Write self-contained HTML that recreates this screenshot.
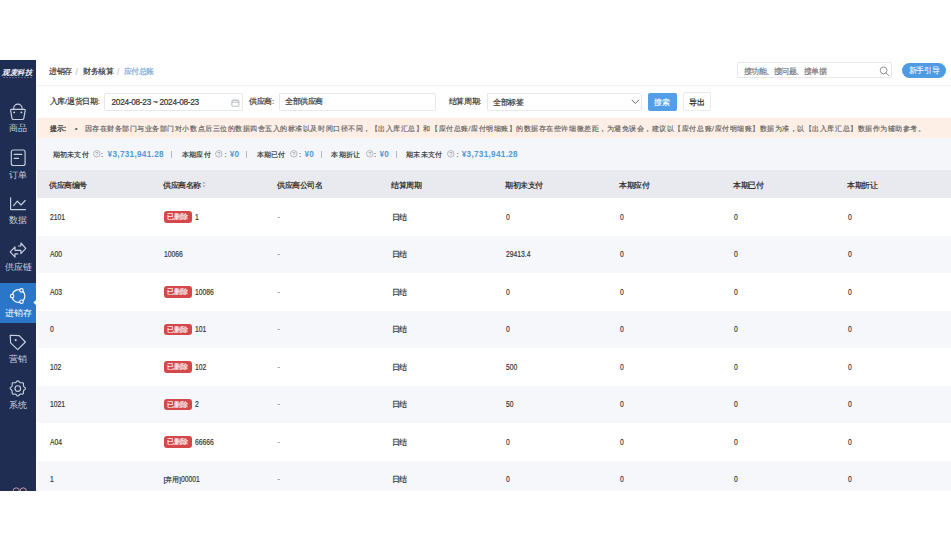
<!DOCTYPE html>
<html><head><meta charset="utf-8">
<style>
*{margin:0;padding:0;box-sizing:border-box;}
html,body{width:951px;height:552px;overflow:hidden;background:#fff;font-family:"Liberation Sans",sans-serif;color:#333;}
.abs{position:absolute;}
#side{position:absolute;left:0;top:60px;width:36.3px;height:431px;background:#1f2d52;}
.logo{position:absolute;left:0.5px;top:8.3px;width:33px;text-align:center;color:#e8ecf5;font-size:7.5px;font-style:italic;font-weight:bold;letter-spacing:-0.5px;white-space:nowrap;}
.logo small{display:block;font-size:2px;line-height:2px;letter-spacing:0;font-style:normal;font-weight:normal;margin-top:-0.5px;color:#aab;}
.mi{position:absolute;left:0;width:36px;text-align:center;color:#c9d0df;font-size:8.5px;line-height:9px;white-space:nowrap;}
.mi svg{position:absolute;left:10px;}
.active{position:absolute;left:0;top:222.6px;width:36.3px;height:40px;background:#2a76c9;}
#main{position:absolute;left:37px;top:60px;width:914px;height:431px;background:#fff;overflow:hidden;}
.t{position:absolute;white-space:nowrap;font-size:7.5px;letter-spacing:-0.5px;line-height:10px;}
.inp{position:absolute;border:1px solid #e2e4e8;border-radius:2px;background:#fff;height:18px;}
.btn{position:absolute;border-radius:2px;height:18px;font-size:7.5px;line-height:16px;text-align:center;}
#notice{position:absolute;left:0;top:57.5px;width:914px;height:20.5px;background:#fdefe6;}
#sum{position:absolute;left:0;top:78px;width:914px;height:32px;background:#f4f6fa;}
#thead{position:absolute;left:0;top:110.2px;width:914px;height:28.3px;background:#e8eaef;}
.row{position:absolute;left:0;width:914px;height:37.5px;}
.row.g{background:#f5f7fa;}
.c{position:absolute;top:0.5px;margin-left:0.5px;height:37.5px;line-height:37.5px;font-size:7.4px;letter-spacing:-0.15px;color:#333;white-space:nowrap;}
.th{position:absolute;top:1.6px;height:28.3px;line-height:28.3px;font-size:8px;letter-spacing:-0.5px;color:#222;-webkit-text-stroke:0.2px #222;white-space:nowrap;}
.tag{display:inline-block;vertical-align:middle;background:#d4474b;color:#fff;border-radius:3px;height:11.5px;line-height:11.5px;width:28.4px;text-align:center;font-size:7px;letter-spacing:0.4px;-webkit-text-stroke:0.15px #fff;margin-right:3px;position:relative;top:-1px;}
.blue{color:#4d9be3;font-weight:bold;}
.q{color:#888;}
.cj{font-size:8px;letter-spacing:-0.9px;position:relative;top:-0.3px;}
.c,.t,.sl{-webkit-text-stroke:0.18px currentColor;}
.n{display:inline-block;font-size:8.7px;letter-spacing:0;transform:scaleX(0.78);transform-origin:0 50%;}
.sl{position:absolute;top:12px;font-size:7.3px;letter-spacing:0.3px;line-height:10px;color:#333;white-space:nowrap;}
.sv{position:absolute;top:11.6px;font-size:8.2px;line-height:10px;color:#5598d6;font-weight:bold;letter-spacing:0.3px;white-space:nowrap;}
</style></head>
<body>
<div id="side">
  <div class="logo">观麦科技</div><div class="abs" style="left:3px;top:17px;width:29px;height:0.8px;background:repeating-linear-gradient(90deg,#9aa3b8 0 2px,transparent 2px 3px);opacity:0.45;"></div>
  <div class="active"></div>
  <svg class="abs" style="left:0;top:0" width="37" height="431" viewBox="0 60 37 431" fill="none" stroke="#c9d0e0" stroke-width="1.15" stroke-linejoin="round" stroke-linecap="round">
<path d="M13.7 109.4 V108.3 A4.2 4.2 0 0 1 22.1 108.3 V109.4"/>
<path d="M11.4 109.4 H24.4 Q25.3 109.4 25.2 110.3 L23.8 118.3 Q23.6 119.5 22.4 119.5 H13.4 Q12.2 119.5 12 118.3 L10.6 110.3 Q10.5 109.4 11.4 109.4 Z"/>
<circle cx="14.2" cy="112.4" r="0.95" fill="#c9d0e0" stroke="none"/>
<circle cx="21.4" cy="112.4" r="0.95" fill="#c9d0e0" stroke="none"/>
<rect x="11.3" y="150" width="13.8" height="15.5" rx="2"/>
<path d="M14.2 154.4 H21.8 M14.2 158.4 H18.6"/>
<path d="M10.6 197.8 V209.6 H25.5"/>
<path d="M13.6 205.6 L17.4 201.2 L21 205 L25.2 200.5"/>
<path d="M18.6 246 L20.9 246 L20.9 243 L25.8 248.3 L20.9 253.6 L20.9 250.3 L17.6 250.3"/>
<path d="M17.6 250.3 L15 250.3 L15 246.8 L10.2 251.8 L15 257.2 L15 253.8 L17.8 253.8"/>
<path d="M17.80 380.80 L18.17 380.87 L18.52 381.08 L18.84 381.40 L19.12 381.78 L19.39 382.04 L19.65 382.29 L19.92 382.49 L20.19 382.63 L20.48 382.72 L20.81 382.77 L21.17 382.78 L21.55 382.79 L22.01 382.72 L22.46 382.72 L22.86 382.82 L23.17 383.03 L23.38 383.34 L23.48 383.74 L23.48 384.19 L23.41 384.65 L23.42 385.03 L23.43 385.39 L23.48 385.72 L23.57 386.01 L23.71 386.28 L23.91 386.55 L24.16 386.81 L24.42 387.08 L24.80 387.36 L25.12 387.68 L25.33 388.03 L25.40 388.40 L25.33 388.77 L25.12 389.12 L24.80 389.44 L24.42 389.72 L24.16 389.99 L23.91 390.25 L23.71 390.52 L23.57 390.79 L23.48 391.08 L23.43 391.41 L23.42 391.77 L23.41 392.15 L23.48 392.61 L23.48 393.06 L23.38 393.46 L23.17 393.77 L22.86 393.98 L22.46 394.08 L22.01 394.08 L21.55 394.01 L21.17 394.02 L20.81 394.03 L20.48 394.08 L20.19 394.17 L19.92 394.31 L19.65 394.51 L19.39 394.76 L19.12 395.02 L18.84 395.40 L18.52 395.72 L18.17 395.93 L17.80 396.00 L17.43 395.93 L17.08 395.72 L16.76 395.40 L16.48 395.02 L16.21 394.76 L15.95 394.51 L15.68 394.31 L15.41 394.17 L15.12 394.08 L14.79 394.03 L14.43 394.02 L14.05 394.01 L13.59 394.08 L13.14 394.08 L12.74 393.98 L12.43 393.77 L12.22 393.46 L12.12 393.06 L12.12 392.61 L12.19 392.15 L12.18 391.77 L12.17 391.41 L12.12 391.08 L12.03 390.79 L11.89 390.52 L11.69 390.25 L11.44 389.99 L11.18 389.72 L10.80 389.44 L10.48 389.12 L10.27 388.77 L10.20 388.40 L10.27 388.03 L10.48 387.68 L10.80 387.36 L11.18 387.08 L11.44 386.81 L11.69 386.55 L11.89 386.28 L12.03 386.01 L12.12 385.72 L12.17 385.39 L12.18 385.03 L12.19 384.65 L12.12 384.19 L12.12 383.74 L12.22 383.34 L12.43 383.03 L12.74 382.82 L13.14 382.72 L13.59 382.72 L14.05 382.79 L14.43 382.78 L14.79 382.77 L15.12 382.72 L15.41 382.63 L15.68 382.49 L15.95 382.29 L16.21 382.04 L16.48 381.78 L16.76 381.40 L17.08 381.08 L17.43 380.87 L17.80 380.80Z"/>
<circle cx="17.8" cy="388.5" r="2.8"/>
<path d="M10.2 335.2 L19.2 335.6 L25.4 342 L17.7 349.7 L10.6 342.8 Z"/>
<circle cx="15.7" cy="340.1" r="1.1" fill="#c9d0e0" stroke="none"/>
<path d="M13 491 A3.2 3.2 0 0 1 19.4 491 M20 491 A3.2 3.2 0 0 1 26.4 491" stroke="#d8a3ad" stroke-width="0.9"/>
</svg>
  <svg class="abs" style="left:0;top:0" width="37" height="431" viewBox="0 60 37 431" fill="none" stroke="#fff" stroke-width="1.15">
<circle cx="18.5" cy="296.05" r="6.4"/>
<circle cx="21.50" cy="290.40" r="1.7" fill="#235ea6"/><circle cx="12.10" cy="296.05" r="1.7" fill="#235ea6"/><circle cx="21.50" cy="301.70" r="1.7" fill="#235ea6"/>
<path d="M33.4 302.5 L36.5 299.6 L36.5 305.4 Z" fill="#fff" stroke="none"/>
</svg>
  <div class="mi" style="top:64.2px;">商品</div>
  <div class="mi" style="top:110.6px;">订单</div>
  <div class="mi" style="top:155.7px;">数据</div>
  <div class="mi" style="top:202.6px;">供应链</div>
  <div class="mi" style="top:249px;color:#fff;">进销存</div>
  <div class="mi" style="top:294.8px;">营销</div>
  <div class="mi" style="top:341.3px;">系统</div>
</div>
<div id="main">
  <!-- breadcrumb -->
  <div class="t" style="left:12.3px;top:7.3px;color:#333;">进销存</div>
  <div class="t" style="left:38.4px;top:6.8px;color:#c8ccd4;font-size:8.5px;letter-spacing:0;">/</div>
  <div class="t" style="left:46px;top:7.3px;color:#333;">财务核算</div>
  <div class="t" style="left:79.9px;top:6.8px;color:#c8ccd4;font-size:8.5px;letter-spacing:0;">/</div>
  <div class="t" style="left:86.7px;top:7.3px;color:#78a9db;">应付总账</div>
  <div class="abs" style="left:0;top:25.3px;width:914px;height:1px;background:#f1f2f5;"></div>
  <!-- search -->
  <div class="inp" style="left:700.4px;top:2.3px;width:155px;height:16.2px;border-color:#e6e8ec;"></div>
  <div class="t" style="left:707px;top:6.5px;color:#777;font-size:7.5px;letter-spacing:-0.55px;">搜功能、搜问题、搜单据</div>
  <svg class="abs" style="left:842px;top:5.5px;" width="11" height="11" viewBox="0 0 11 11" fill="none" stroke="#888" stroke-width="0.9"><circle cx="4.6" cy="4.4" r="3.4"/><path d="M7 6.9 L9.8 9.7" stroke-linecap="round"/></svg>
  <div class="btn" style="left:865px;top:3.1px;width:44px;height:15.4px;border-radius:7.7px;background:#4d9be3;color:#fff;line-height:15.6px;font-size:7.5px;letter-spacing:-0.3px;-webkit-text-stroke:0.05px #fff;">新手引导</div>
  <!-- filter -->
  <div class="t" style="left:12.7px;top:37px;letter-spacing:-0.3px;">入库/退货日期:</div>
  <div class="inp" style="left:67.4px;top:32.6px;width:138.4px;height:18.3px;border-color:#e6e8ec;border-radius:1.5px;"></div>
  <div class="t" style="left:74.5px;top:37px;font-size:8.3px;letter-spacing:-0.3px;">2024-08-23 ~ 2024-08-23</div>
  <svg class="abs" style="left:193.5px;top:38.5px;" width="9" height="8" viewBox="0 0 9 8" fill="none" stroke="#a8adb5" stroke-width="0.8"><rect x="0.9" y="1.3" width="7" height="6" rx="0.6"/><path d="M0.9 3.2 H7.9 M2.8 0.3 V1.8 M6 0.3 V1.8"/></svg>
  <div class="t" style="left:212.4px;top:37px;">供应商:</div>
  <div class="inp" style="left:242.2px;top:32.6px;width:157px;height:18.3px;border-color:#e6e8ec;border-radius:1.5px;"></div>
  <div class="t" style="left:248px;top:37px;">全部供应商</div>
  <div class="t" style="left:411.5px;top:37px;letter-spacing:-0.3px;">结算周期:</div>
  <div class="inp" style="left:449.5px;top:32.6px;width:155.2px;height:18.3px;border-color:#e6e8ec;border-radius:1.5px;"></div>
  <div class="t" style="left:456px;top:37.5px;">全部标签</div>
  <svg class="abs" style="left:593.6px;top:39.2px;" width="9" height="6" viewBox="0 0 9 6" fill="none" stroke="#6a6e75" stroke-width="1"><path d="M0.7 0.8 L4.4 4.5 L8.1 0.8"/></svg>
  <div class="btn" style="left:611.2px;top:32.7px;width:28.6px;height:17.9px;line-height:19.5px;background:#529fe8;color:#fff;-webkit-text-stroke:0.1px #fff;">搜索</div>
  <div class="btn" style="left:646.3px;top:32.2px;width:28.2px;height:18.5px;line-height:19.5px;border:1px solid #e8eaee;color:#222;-webkit-text-stroke:0.2px #222;">导出</div>
  <!-- notice -->
  <div id="notice">
    <div class="t" style="left:13px;top:6.6px;font-size:7.4px;letter-spacing:0;-webkit-text-stroke:0.35px #444;color:#444;">提示:</div>
    <div class="t" style="left:38px;top:6.2px;font-size:7px;color:#555;">•</div>
    <div class="t" style="left:47.6px;top:6.4px;font-size:7px;letter-spacing:0.53px;color:#666;">因存在财务部门与业务部门对小数点后三位的数据四舍五入的标准以及时间口径不同，【出入库汇总】和【应付总账/应付明细账】的数据存在些许细微差距，为避免误会，建议以【应付总账/应付明细账】数据为准，以【出入库汇总】数据作为辅助参考。</div>
  </div>
  <!-- summary -->
  <div id="sum">
<div class="sl" style="left:15.6px;">期初未支付</div>
<svg class="abs" style="left:56.4px;top:12.2px;" width="8" height="8" viewBox="-0.3 -0.3 7.6 7.6"><circle cx="3.3" cy="3.3" r="3.1" fill="none" stroke="#999ea6" stroke-width="0.65"/><text x="3.3" y="5.4" font-size="5.2" text-anchor="middle" fill="#8d929a" font-family="Liberation Sans">?</text></svg>
<div class="sl" style="left:63.9px;">:</div>
<div class="sv" style="left:70.6px;">¥3,731,941.28</div>
<div class="abs" style="left:134.4px;top:12.8px;width:0.7px;height:7.6px;background:#b5bac2;"></div>
<div class="sl" style="left:144.8px;">本期应付</div>
<svg class="abs" style="left:177.9px;top:12.2px;" width="8" height="8" viewBox="-0.3 -0.3 7.6 7.6"><circle cx="3.3" cy="3.3" r="3.1" fill="none" stroke="#999ea6" stroke-width="0.65"/><text x="3.3" y="5.4" font-size="5.2" text-anchor="middle" fill="#8d929a" font-family="Liberation Sans">?</text></svg>
<div class="sl" style="left:187.4px;">:</div>
<div class="sv" style="left:192.7px;">¥0</div>
<div class="abs" style="left:209.4px;top:12.8px;width:0.7px;height:7.6px;background:#b5bac2;"></div>
<div class="sl" style="left:219.5px;">本期已付</div>
<svg class="abs" style="left:252.7px;top:12.2px;" width="8" height="8" viewBox="-0.3 -0.3 7.6 7.6"><circle cx="3.3" cy="3.3" r="3.1" fill="none" stroke="#999ea6" stroke-width="0.65"/><text x="3.3" y="5.4" font-size="5.2" text-anchor="middle" fill="#8d929a" font-family="Liberation Sans">?</text></svg>
<div class="sl" style="left:262.1px;">:</div>
<div class="sv" style="left:267.5px;">¥0</div>
<div class="abs" style="left:284.0px;top:12.8px;width:0.7px;height:7.6px;background:#b5bac2;"></div>
<div class="sl" style="left:294.3px;">本期折让</div>
<svg class="abs" style="left:328.5px;top:12.2px;" width="8" height="8" viewBox="-0.3 -0.3 7.6 7.6"><circle cx="3.3" cy="3.3" r="3.1" fill="none" stroke="#999ea6" stroke-width="0.65"/><text x="3.3" y="5.4" font-size="5.2" text-anchor="middle" fill="#8d929a" font-family="Liberation Sans">?</text></svg>
<div class="sl" style="left:337.1px;">:</div>
<div class="sv" style="left:342.4px;">¥0</div>
<div class="abs" style="left:358.5px;top:12.8px;width:0.7px;height:7.6px;background:#b5bac2;"></div>
<div class="sl" style="left:369.2px;">期末未支付</div>
<svg class="abs" style="left:410.0px;top:12.2px;" width="8" height="8" viewBox="-0.3 -0.3 7.6 7.6"><circle cx="3.3" cy="3.3" r="3.1" fill="none" stroke="#999ea6" stroke-width="0.65"/><text x="3.3" y="5.4" font-size="5.2" text-anchor="middle" fill="#8d929a" font-family="Liberation Sans">?</text></svg>
<div class="sl" style="left:419.5px;">:</div>
<div class="sv" style="left:424.7px;">¥3,731,941.28</div>
</div>
  <!-- table -->
  <div id="thead">
    <div class="th" style="left:12.3px;">供应商编号</div>
    <div class="th" style="left:126px;">供应商名称<svg style="position:absolute;left:39.3px;top:9.6px;" width="4" height="7" viewBox="0 0 4 7" fill="#b4b8c0"><path d="M2 0.3 L3.7 2.7 H0.3 Z M2 6.7 L3.7 4.3 H0.3 Z"/></svg></div>
    <div class="th" style="left:240px;">供应商公司名</div>
    <div class="th" style="left:354px;">结算周期</div>
    <div class="th" style="left:468px;">期初未支付</div>
    <div class="th" style="left:582px;">本期应付</div>
    <div class="th" style="left:696px;">本期已付</div>
    <div class="th" style="left:810px;">本期折让</div>
  </div>
  <div id="rows">
<div class="row" style="top:138.3px;"><div class="c" style="left:12.3px;"><span class="n">2101</span></div><div class="c" style="left:126px;"><span class="tag">已删除</span><span class="n">1</span></div><div class="c" style="left:240px;color:#777;top:-0.5px;">-</div><div class="c" style="left:354px;"><span class="cj">日结</span></div><div class="c" style="left:468px;"><span class="n">0</span></div><div class="c" style="left:582px;"><span class="n">0</span></div><div class="c" style="left:696px;"><span class="n">0</span></div><div class="c" style="left:810px;"><span class="n">0</span></div></div>
<div class="row g" style="top:175.8px;"><div class="c" style="left:12.3px;"><span class="n">A00</span></div><div class="c" style="left:126px;"><span class="n">10066</span></div><div class="c" style="left:240px;color:#777;top:-0.5px;">-</div><div class="c" style="left:354px;"><span class="cj">日结</span></div><div class="c" style="left:468px;"><span class="n">29413.4</span></div><div class="c" style="left:582px;"><span class="n">0</span></div><div class="c" style="left:696px;"><span class="n">0</span></div><div class="c" style="left:810px;"><span class="n">0</span></div></div>
<div class="row" style="top:213.3px;"><div class="c" style="left:12.3px;"><span class="n">A03</span></div><div class="c" style="left:126px;"><span class="tag">已删除</span><span class="n">10086</span></div><div class="c" style="left:240px;color:#777;top:-0.5px;">-</div><div class="c" style="left:354px;"><span class="cj">日结</span></div><div class="c" style="left:468px;"><span class="n">0</span></div><div class="c" style="left:582px;"><span class="n">0</span></div><div class="c" style="left:696px;"><span class="n">0</span></div><div class="c" style="left:810px;"><span class="n">0</span></div></div>
<div class="row g" style="top:250.8px;"><div class="c" style="left:12.3px;"><span class="n">0</span></div><div class="c" style="left:126px;"><span class="tag">已删除</span><span class="n">101</span></div><div class="c" style="left:240px;color:#777;top:-0.5px;">-</div><div class="c" style="left:354px;"><span class="cj">日结</span></div><div class="c" style="left:468px;"><span class="n">0</span></div><div class="c" style="left:582px;"><span class="n">0</span></div><div class="c" style="left:696px;"><span class="n">0</span></div><div class="c" style="left:810px;"><span class="n">0</span></div></div>
<div class="row" style="top:288.3px;"><div class="c" style="left:12.3px;"><span class="n">102</span></div><div class="c" style="left:126px;"><span class="tag">已删除</span><span class="n">102</span></div><div class="c" style="left:240px;color:#777;top:-0.5px;">-</div><div class="c" style="left:354px;"><span class="cj">日结</span></div><div class="c" style="left:468px;"><span class="n">500</span></div><div class="c" style="left:582px;"><span class="n">0</span></div><div class="c" style="left:696px;"><span class="n">0</span></div><div class="c" style="left:810px;"><span class="n">0</span></div></div>
<div class="row g" style="top:325.8px;"><div class="c" style="left:12.3px;"><span class="n">1021</span></div><div class="c" style="left:126px;"><span class="tag">已删除</span><span class="n">2</span></div><div class="c" style="left:240px;color:#777;top:-0.5px;">-</div><div class="c" style="left:354px;"><span class="cj">日结</span></div><div class="c" style="left:468px;"><span class="n">50</span></div><div class="c" style="left:582px;"><span class="n">0</span></div><div class="c" style="left:696px;"><span class="n">0</span></div><div class="c" style="left:810px;"><span class="n">0</span></div></div>
<div class="row" style="top:363.3px;"><div class="c" style="left:12.3px;"><span class="n">A04</span></div><div class="c" style="left:126px;"><span class="tag">已删除</span><span class="n">66666</span></div><div class="c" style="left:240px;color:#777;top:-0.5px;">-</div><div class="c" style="left:354px;"><span class="cj">日结</span></div><div class="c" style="left:468px;"><span class="n">0</span></div><div class="c" style="left:582px;"><span class="n">0</span></div><div class="c" style="left:696px;"><span class="n">0</span></div><div class="c" style="left:810px;"><span class="n">0</span></div></div>
<div class="row g" style="top:400.8px;"><div class="c" style="left:12.3px;"><span class="n">1</span></div><div class="c" style="left:126px;">[弃用]<span class="n">00001</span></div><div class="c" style="left:240px;color:#777;top:-0.5px;">-</div><div class="c" style="left:354px;"><span class="cj">日结</span></div><div class="c" style="left:468px;"><span class="n">0</span></div><div class="c" style="left:582px;"><span class="n">0</span></div><div class="c" style="left:696px;"><span class="n">0</span></div><div class="c" style="left:810px;"><span class="n">0</span></div></div>
</div>
</div>
</body></html>
